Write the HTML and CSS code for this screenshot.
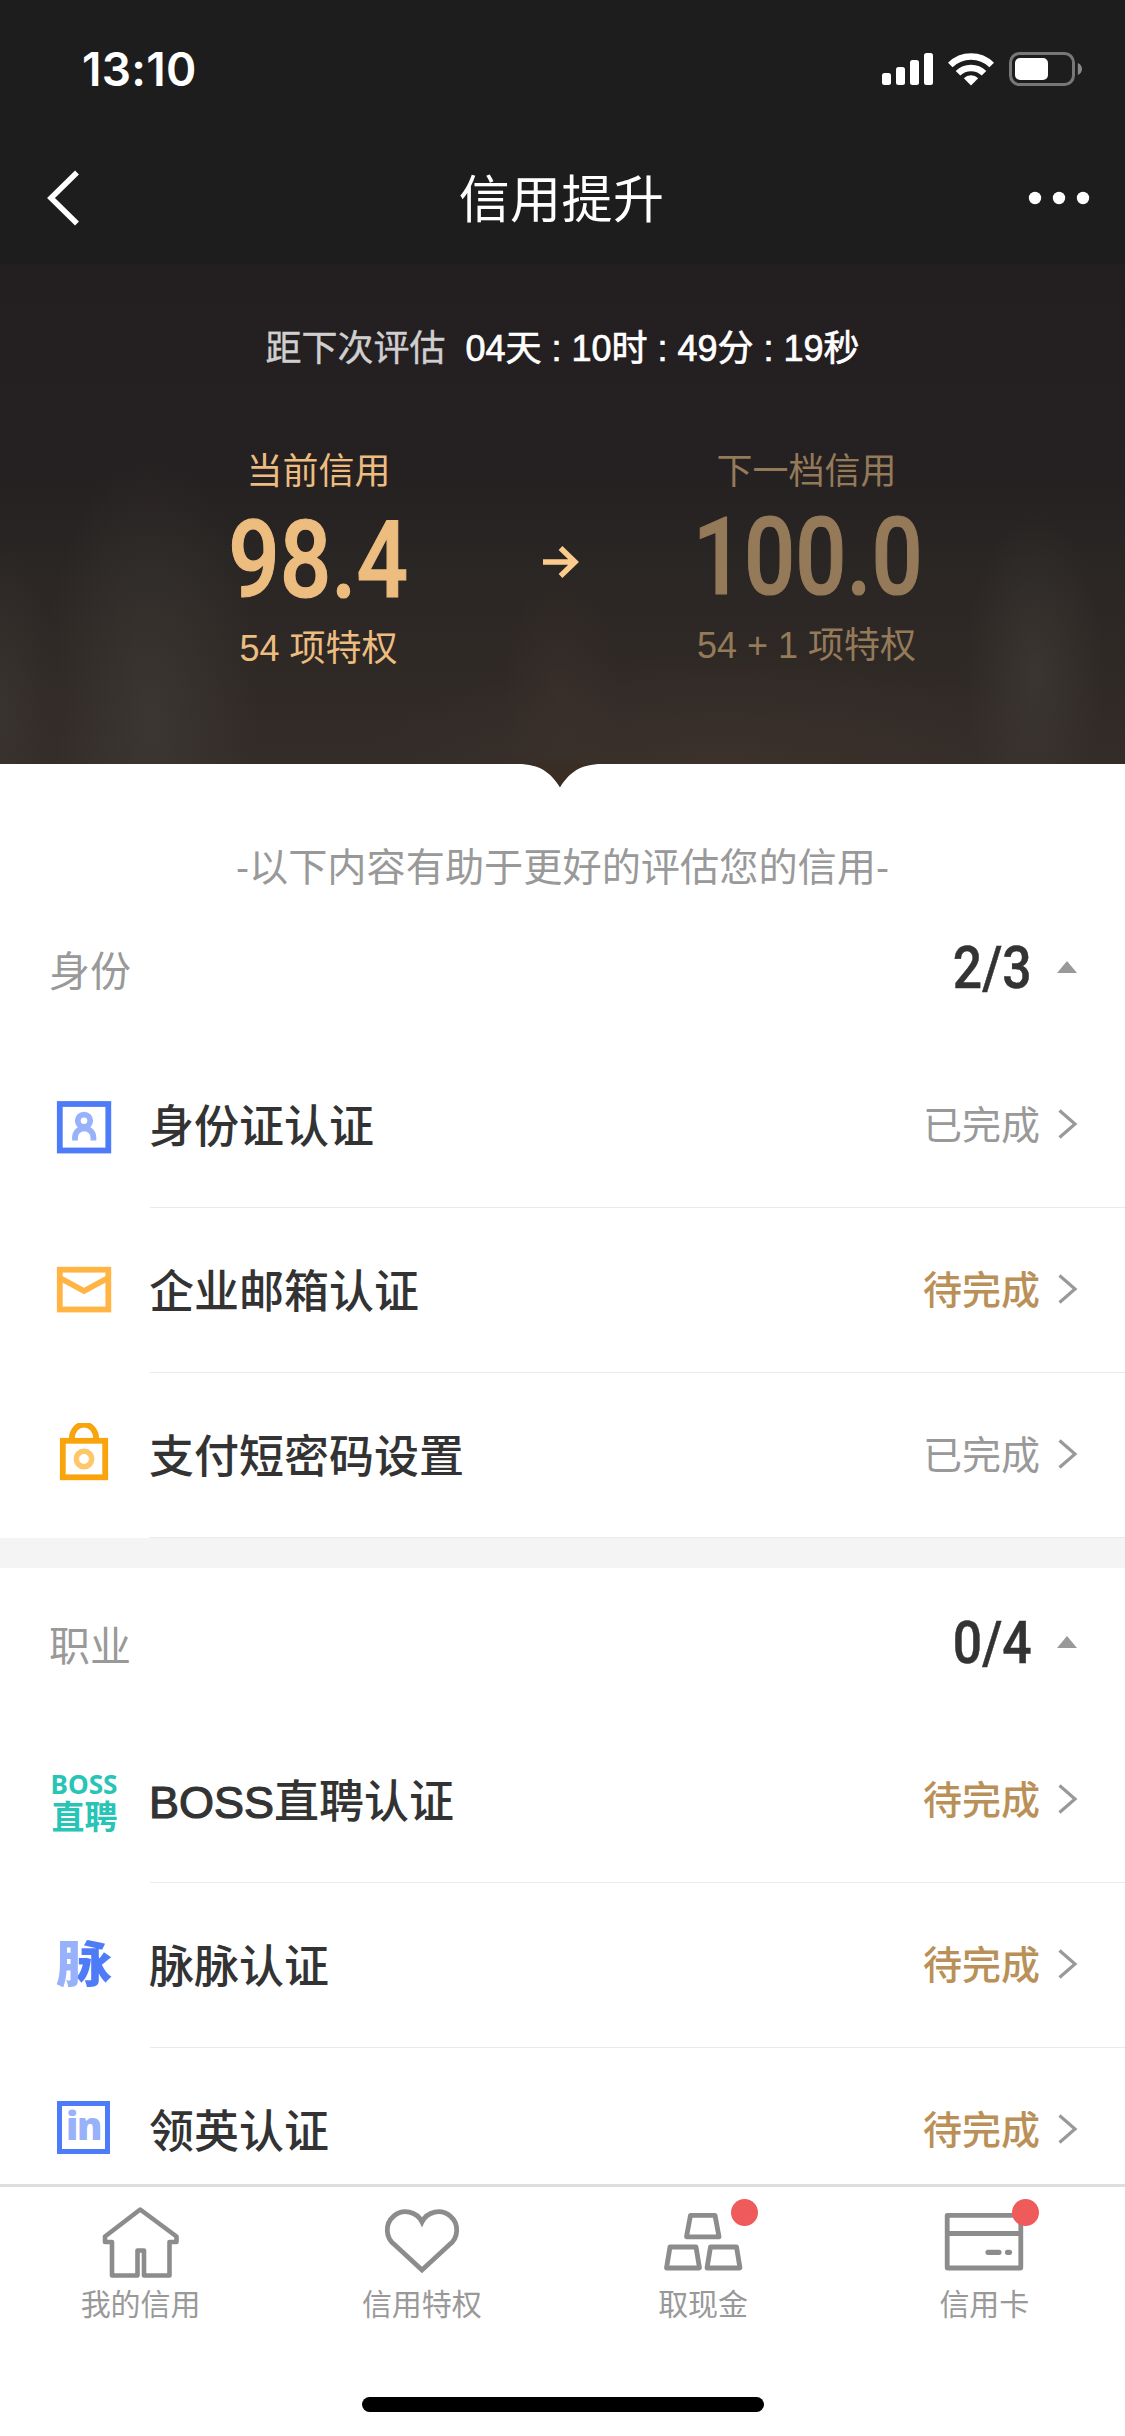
FILE: index.html
```
<!DOCTYPE html>
<html lang="zh-CN">
<head>
<meta charset="utf-8">
<title>信用提升</title>
<link rel="stylesheet" href="styles.css">
</head>
<body>
<div class="app">
  <header class="top">
    <div class="status-bar">
      <span class="clock">13:10</span>
      <svg class="status-icons" width="202" height="36" viewBox="881 51 202 36">
        <g fill="#fff">
          <rect x="882" y="73" width="9" height="12" rx="2.500"/>
          <rect x="896" y="67" width="9" height="18" rx="2.500"/>
          <rect x="910" y="60" width="9" height="25" rx="2.500"/>
          <rect x="924" y="53" width="9" height="32" rx="2.500"/>
          <path d="M971 85.500l-7.200-7.300a10.300 10.300 0 0 1 14.400 0z"/>
        </g>
        <g fill="none" stroke="#fff" stroke-width="6.500">
          <path d="M958 73.200a18.600 18.600 0 0 1 26 0"/>
          <path d="M950.300 65a29.500 29.500 0 0 1 41.400 0"/>
        </g>
        <rect x="1010.500" y="53.500" width="63" height="31" rx="9" fill="none" stroke="#777" stroke-width="3"/>
        <rect x="1015" y="58" width="33" height="22" rx="5" fill="#fff"/>
        <path d="M1077.800 63c5.600 2 5.600 10 0 12z" fill="#888"/>
      </svg>
    </div>
    <nav class="nav-bar">
      <svg class="back" width="34" height="56" viewBox="0 0 34 56"><path d="M31 2.500L5 28l26 25.500" fill="none" stroke="#fff" stroke-width="5.500"/></svg>
      <h1 class="nav-title">信用提升</h1>
      <svg class="more" width="62" height="14" viewBox="0 0 62 14" fill="#fff"><circle cx="7" cy="7" r="6.200"/><circle cx="31" cy="7" r="6.200"/><circle cx="55" cy="7" r="6.200"/></svg>
    </nav>
  </header>

  <section class="hero">
    <p class="countdown"><span class="countdown-label">距下次评估</span><span class="countdown-time">04天 : 10时 : 49分 : 19秒</span></p>
    <div class="scores">
      <div class="score score-now">
        <span class="score-label">当前信用</span>
        <span class="score-value">98.4</span>
        <span class="score-perks">54 项特权</span>
      </div>
      <svg class="arrow" width="36" height="34" viewBox="0 0 36 34"><path d="M0 17h32M17.500 3L32 17 17.500 31" fill="none" stroke="#fbcb8c" stroke-width="5.500"/></svg>
      <div class="score score-next">
        <span class="score-label">下一档信用</span>
        <span class="score-value">100.0</span>
        <span class="score-perks">54 + 1 项特权</span>
      </div>
    </div>
    <svg class="notch" width="84" height="25" viewBox="0 0 84 25"><path d="M0 0V1C22 1 33 10 42 24.500C51 10 62 1 84 1V0z" fill="#3a2d24"/></svg>
  </section>

  <main class="content">
    <p class="note">-以下内容有助于更好的评估您的信用-</p>

    <section class="group">
      <div class="group-head"><h2>身份</h2><span class="count">2/3</span><i class="fold"></i></div>
      <div class="row">
        <svg class="icon" width="70" height="66" viewBox="49 1093 70 66"><rect x="59.800" y="1104" width="48.500" height="46.500" fill="none" stroke="#4e7cf8" stroke-width="5.800"/><g fill="none" stroke="#98b1fb" stroke-width="5.800"><circle cx="84" cy="1120.800" r="6.200"/><path d="M75 1140.500v-3a9.200 9.200 0 0 1 18.400 0v3"/></g></svg>
        <div class="row-body"><span class="name">身份证认证</span><span class="state">已完成</span><svg class="go" width="20" height="32" viewBox="0 0 20 32"><path d="M1.500 2.500L17 16 1.500 29.500"/></svg></div>
      </div>
      <div class="row">
        <svg class="icon" width="70" height="66" viewBox="49 1257.500 70 66"><g fill="none" stroke="#ffb444" stroke-width="5.800"><rect x="59.800" y="1269.200" width="48.500" height="39.800"/><path d="M61 1278l23 12.500 23-12.500"/></g></svg>
        <div class="row-body"><span class="name">企业邮箱认证</span><span class="state pending">待完成</span><svg class="go" width="20" height="32" viewBox="0 0 20 32"><path d="M1.500 2.500L17 16 1.500 29.500"/></svg></div>
      </div>
      <div class="row">
        <svg class="icon" width="70" height="66" viewBox="49 1422.500 70 66"><g fill="none" stroke="#f9a30d" stroke-width="5.800"><rect x="62.800" y="1440.300" width="42.400" height="36.500"/><path d="M71.800 1440v-2a12.200 14 0 0 1 24.400 0v2"/></g><circle cx="84" cy="1458.500" r="7.700" fill="none" stroke="#fdc76a" stroke-width="5.500"/></svg>
        <div class="row-body"><span class="name">支付短密码设置</span><span class="state">已完成</span><svg class="go" width="20" height="32" viewBox="0 0 20 32"><path d="M1.500 2.500L17 16 1.500 29.500"/></svg></div>
      </div>
    </section>

    <section class="group">
      <div class="group-head"><h2>职业</h2><span class="count">0/4</span><i class="fold"></i></div>
      <div class="row">
        <svg class="icon boss" width="70" height="90" viewBox="49 1758 70 90"><text class="boss-en" x="50.500" y="1796" textLength="67" lengthAdjust="spacingAndGlyphs">BOSS</text><text class="boss-cn" x="51.500" y="1830.500">直聘</text></svg>
        <div class="row-body"><span class="name"><span class="latin">BOSS</span>直聘认证</span><span class="state pending">待完成</span><svg class="go" width="20" height="32" viewBox="0 0 20 32"><path d="M1.500 2.500L17 16 1.500 29.500"/></svg></div>
      </div>
      <div class="row">
        <div class="icon mai"><b>脉</b></div>
        <div class="row-body"><span class="name">脉脉认证</span><span class="state pending">待完成</span><svg class="go" width="20" height="32" viewBox="0 0 20 32"><path d="M1.500 2.500L17 16 1.500 29.500"/></svg></div>
      </div>
      <div class="row">
        <div class="icon linked"><b>in</b></div>
        <div class="row-body"><span class="name">领英认证</span><span class="state pending">待完成</span><svg class="go" width="20" height="32" viewBox="0 0 20 32"><path d="M1.500 2.500L17 16 1.500 29.500"/></svg></div>
      </div>
    </section>
  </main>

  <footer class="tabs">
    <a class="tab">
      <svg width="82" height="76" viewBox="100 2203 82 76"><path d="M140.200 2209.500L105 2236.500v5.500h7v33.500h25.500v-25h6.500v25h25.500V2242h7v-5.500z" fill="none" stroke="#8c8c8c" stroke-width="4.600" stroke-linejoin="round"/></svg>
      <span>我的信用</span>
    </a>
    <a class="tab">
      <svg width="82" height="76" viewBox="381 2203 82 76"><path d="M422 2270L395 2245A18.300 18.300 0 1 1 422 2222A18.300 18.300 0 1 1 449 2245z" fill="none" stroke="#8c8c8c" stroke-width="4.800"/></svg>
      <span>信用特权</span>
    </a>
    <a class="tab">
      <svg width="82" height="76" viewBox="662 2203 82 76"><g fill="none" stroke="#8c8c8c" stroke-width="4.800" stroke-linejoin="round"><path d="M690.500 2215.300h24.500l4 21.500h-32.500z"/><path d="M670 2247h26l3.500 21h-33z"/><path d="M710.500 2247h26l3.500 21h-33z"/></g></svg>
      <span>取现金</span><i class="dot"></i>
    </a>
    <a class="tab">
      <svg width="82" height="76" viewBox="943 2203 82 76"><g fill="none" stroke="#8c8c8c" stroke-width="4.800" stroke-linejoin="round"><path d="M947.200 2215.300h73.600v52.700h-73.600zM947 2233.500h74"/><path d="M988 2252.300h11M1007.500 2252.300h2" stroke-width="5.200" stroke-linecap="round"/></g></svg>
      <span>信用卡</span><i class="dot"></i>
    </a>
    <div class="home-indicator"></div>
  </footer>
</div>
</body>
</html>
```
FILE: styles.css
```
* { box-sizing: border-box; }

body {
  margin: 0;
  font-family: "Liberation Sans", "Noto Sans CJK SC", sans-serif;
  color: #333;
  background: #fff;
}

h1, h2, p { margin: 0; font-weight: 400; }
svg { display: block; flex: none; }

.app {
  width: 1125px;
  height: 2436px;
  display: flex;
  flex-direction: column;
  overflow: hidden;
}

.top { height: 264px; flex: none; background: #1d1d1d; color: #fff; }

.status-bar {
  height: 132px;
  padding: 6px 42px 0 82px;
  display: flex;
  align-items: center;
  justify-content: space-between;
}
.clock { font: 600 46px/50px Inter, sans-serif; letter-spacing: .3px; }

.nav-bar {
  height: 132px;
  padding: 0 35px 0 46px;
  display: grid;
  grid-template-columns: 62px 1fr 62px;
  align-items: center;
}
.nav-title { font-size: 51px; line-height: 76px; text-align: center; padding: 5px 13px 0 0; letter-spacing: .4px; }

.hero {
  position: relative;
  flex: none;
  height: 500px;
  padding-top: 61px;
  background:
    radial-gradient(ellipse 110px 260px at 150px 450px, rgba(72, 68, 62, .45), transparent),
    radial-gradient(ellipse 70px 160px at 1035px 410px, rgba(72, 68, 62, .45), transparent),
    radial-gradient(ellipse 60px 160px at 0 440px, rgba(72, 68, 62, .35), transparent),
    radial-gradient(ellipse 60px 120px at 560px 430px, rgba(68, 52, 44, .35), transparent),
    radial-gradient(ellipse 360px 110px at 720px 500px, rgba(68, 54, 46, .55), transparent),
    linear-gradient(#231e20 0, #252021 200px, #2a2624 300px, #2f2926 400px, #332c28 500px);
}

.countdown {
  display: flex;
  justify-content: center;
  gap: 20px;
  font-size: 36px;
  line-height: 48px;
  white-space: pre;
}
.countdown-label { color: #d0cfcf; -webkit-text-stroke: .4px; }
.countdown-time { color: #fff; -webkit-text-stroke: .7px #fff; }

.scores {
  display: grid;
  grid-template-columns: 340px 36px 340px;
  justify-content: center;
  column-gap: 56px;
  padding-top: 75px;
}
.score { display: flex; flex-direction: column; align-items: center; font-size: 36px; line-height: 48px; color: #edbd80; }
.score-next { color: #957a59; }
.score-value {
  font: 500 108px/118px Roboto, sans-serif;
  transform: scaleX(.84);
  -webkit-text-stroke: 1.200px;
  margin: 5px 0 6px;
}
.score-next .score-value { margin: 2px 0 6px; transform: translateX(1px) scaleX(.835); }
.arrow { margin: 97px 0 0 -2px; }

.notch { position: absolute; left: 518px; top: 499px; z-index: 1; }

.content { flex: 1; min-height: 0; overflow: hidden; }
.note { height: 129px; padding-top: 78px; font-size: 39.200px; line-height: 51px; text-align: center; color: #999; }

.group + .group { border-top: 30px solid #f4f4f4; }
.group-head { height: 150px; padding: 0 48px 0 49px; display: flex; align-items: center; }
.group-head h2 { flex: 1; font-size: 41px; line-height: 60px; color: #999; padding-top: 8px; }
.count { font: 500 60px/60px Roboto, sans-serif; transform: scaleX(.86); transform-origin: right; -webkit-text-stroke: .5px; }
.fold {
  width: 20px;
  height: 12px;
  margin: -2px 0 0 25px;
  background: #999;
  clip-path: polygon(50% 0, 100% 100%, 0 100%);
}

.row { height: 165px; padding-left: 49px; display: flex; align-items: center; }
.icon { flex: none; width: 70px; }
.row-body {
  flex: 1;
  height: 165px;
  margin-left: 31px;
  padding-right: 47px;
  border-bottom: 1px solid #eaeaea;
  display: flex;
  align-items: center;
}
.name { flex: 1; font-size: 45px; font-weight: 500; line-height: 64px; padding-top: 6px; margin-left: -1px; }
.latin { -webkit-text-stroke: 1.200px; }
.state { font-size: 39px; line-height: 56px; color: #999; margin-right: 18px; padding-top: 1px; }
.pending { color: #ba9059; font-weight: 500; }
.go { fill: none; stroke: #999; stroke-width: 3.200; margin-top: -2px; }

.boss { fill: #28c4b5; }
.boss-en { font: 700 27px "Noto Sans", sans-serif; }
.boss-cn { font: 700 33px "Noto Sans CJK SC", sans-serif; }
.mai b {
  display: block;
  text-align: center;
  font: 900 56px/60px "Noto Sans CJK SC", sans-serif;
  color: transparent;
  background: linear-gradient(90deg, #98b1fb 22px, #4e7cf8 22px) 7px 0 / 56px 100% no-repeat;
  -webkit-background-clip: text;
  background-clip: text;
  transform: translateY(-5px) scaleY(.87);
}
.linked { height: 53px; width: 53px; margin: 0 9px 6px 8px; border: 5.500px solid #4e7cf8; text-align: center; }
.linked b { display: block; font: 800 38px/38px "Open Sans", sans-serif; color: #98b1fb; letter-spacing: -1.500px; }

.tabs {
  position: relative;
  flex: none;
  height: 252px;
  border-top: 3px solid #dedede;
  display: grid;
  grid-template-columns: repeat(4, 1fr);
  background: #fff;
}
.tab {
  position: relative;
  display: flex;
  flex-direction: column;
  align-items: center;
  padding-top: 16px;
  font-size: 30px;
  line-height: 44px;
  color: #999;
}
.tab span { margin-top: 4px; }
.dot { position: absolute; left: 168px; top: 12px; width: 27px; height: 27px; border-radius: 50%; background: #ef5b5b; }
.home-indicator { position: absolute; left: 362px; top: 210px; width: 402px; height: 15px; border-radius: 8px; background: #000; }
```
